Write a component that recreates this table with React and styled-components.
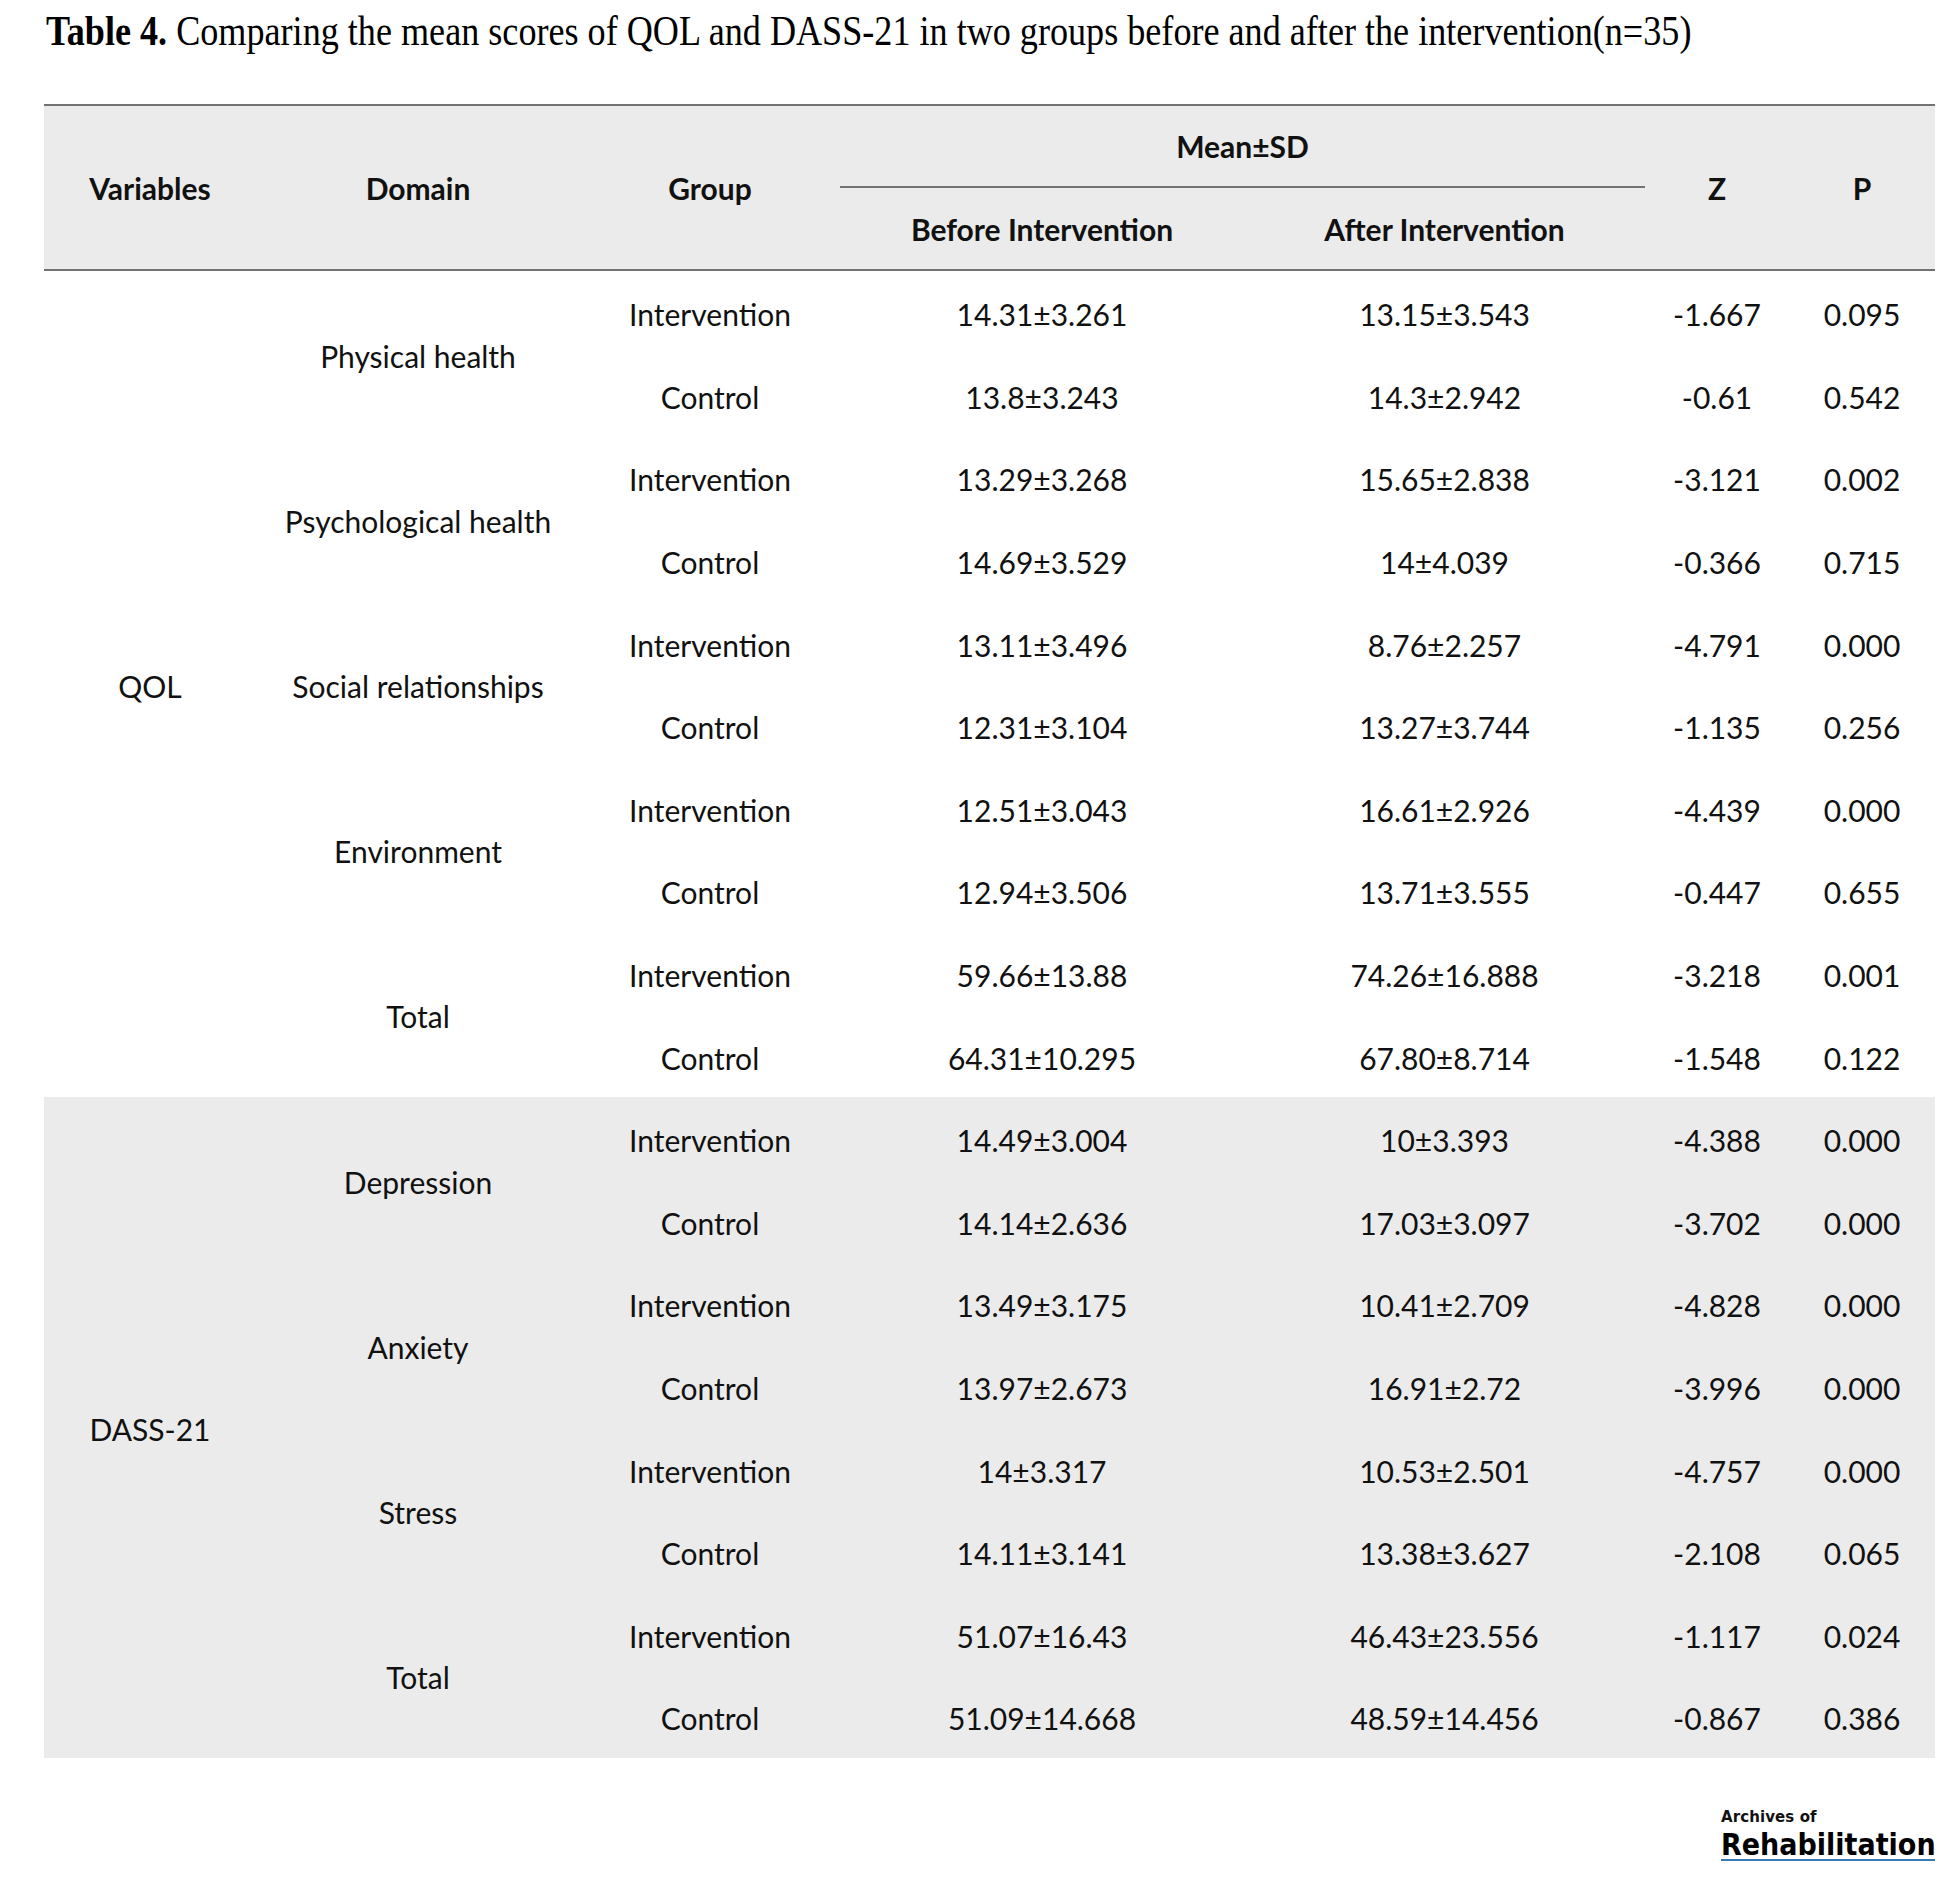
import React from "react";
import styled, { createGlobalStyle } from "styled-components";

const GlobalStyle = createGlobalStyle`
  html, body { margin: 0; padding: 0; background: #ffffff; }
  body { font-family: Lato, "Open Sans", Arial, sans-serif; color: #111; }
`;

const Page = styled.div`
  width: 1954px;
  min-height: 1898px;
  display: flex;
  flex-direction: column;
  background: #fff;
`;

const Caption = styled.div`
  margin: 7px 0 0 46px;
  height: 48px;
  line-height: 48px;
  font-family: "Liberation Serif", "Times New Roman", serif;
  font-size: 41.4px;
  color: #000;
  white-space: nowrap;
  transform: scaleX(0.873);
  transform-origin: left center;
`;

const CaptionLabel = styled.b`
  font-weight: 700;
`;

const Table = styled.table`
  margin: 49px 0 0 44px;
  width: 1891px;
  table-layout: fixed;
  border-collapse: separate;
  border-spacing: 0;
  font-family: Lato, "Open Sans", sans-serif;
  font-size: 30px;
  color: #111;
`;

const HeadRow = styled.tr`
  height: ${(p) => p.$h}px;
`;

const Th = styled.th`
  background: #ebebeb;
  font-weight: 700;
  text-align: center;
  vertical-align: middle;
  padding: 0;
  border-top: ${(p) => (p.$top ? "2px solid #727272" : "none")};
  border-bottom: ${(p) => (p.$bottom ? "2px solid #727272" : "none")};
`;

const BodyRow = styled.tr`
  height: 82.6px;
  background: ${(p) => (p.$shaded ? "#ebebeb" : "#ffffff")};
`;

const Td = styled.td`
  text-align: center;
  vertical-align: middle;
  padding: 4px 0 0;
  white-space: nowrap;
`;

const Footer = styled.div`
  margin-top: 51px;
  display: flex;
  justify-content: flex-end;
  padding-right: 19px;
`;

const Logo = styled.div`
  display: flex;
  flex-direction: column;
  align-items: flex-start;
  width: 214px;
`;

const LogoTop = styled.div`
  font-family: "DejaVu Sans", Lato, sans-serif;
  font-weight: 700;
  font-size: 15px;
  line-height: 16px;
  color: #111;
  letter-spacing: 0.1px;
`;

const LogoMain = styled.div`
  margin-top: 5px;
  font-family: "DejaVu Sans Condensed", "DejaVu Sans", Lato, sans-serif;
  font-stretch: condensed;
  font-weight: 700;
  font-size: 30px;
  line-height: 29px;
  color: #000;
  width: 100%;
  border-bottom: 2px solid #3b7db3;
  white-space: nowrap;
`;

const cols = [212, 324, 260, 404, 401, 144, 146];

const sections = [
  {
    variable: "QOL",
    shaded: false,
    domains: [
      { name: "Physical health", rows: [
        ["Intervention", "14.31±3.261", "13.15±3.543", "-1.667", "0.095"],
        ["Control", "13.8±3.243", "14.3±2.942", "-0.61", "0.542"],
      ] },
      { name: "Psychological health", rows: [
        ["Intervention", "13.29±3.268", "15.65±2.838", "-3.121", "0.002"],
        ["Control", "14.69±3.529", "14±4.039", "-0.366", "0.715"],
      ] },
      { name: "Social relationships", rows: [
        ["Intervention", "13.11±3.496", "8.76±2.257", "-4.791", "0.000"],
        ["Control", "12.31±3.104", "13.27±3.744", "-1.135", "0.256"],
      ] },
      { name: "Environment", rows: [
        ["Intervention", "12.51±3.043", "16.61±2.926", "-4.439", "0.000"],
        ["Control", "12.94±3.506", "13.71±3.555", "-0.447", "0.655"],
      ] },
      { name: "Total", rows: [
        ["Intervention", "59.66±13.88", "74.26±16.888", "-3.218", "0.001"],
        ["Control", "64.31±10.295", "67.80±8.714", "-1.548", "0.122"],
      ] },
    ],
  },
  {
    variable: "DASS-21",
    shaded: true,
    domains: [
      { name: "Depression", rows: [
        ["Intervention", "14.49±3.004", "10±3.393", "-4.388", "0.000"],
        ["Control", "14.14±2.636", "17.03±3.097", "-3.702", "0.000"],
      ] },
      { name: "Anxiety", rows: [
        ["Intervention", "13.49±3.175", "10.41±2.709", "-4.828", "0.000"],
        ["Control", "13.97±2.673", "16.91±2.72", "-3.996", "0.000"],
      ] },
      { name: "Stress", rows: [
        ["Intervention", "14±3.317", "10.53±2.501", "-4.757", "0.000"],
        ["Control", "14.11±3.141", "13.38±3.627", "-2.108", "0.065"],
      ] },
      { name: "Total", rows: [
        ["Intervention", "51.07±16.43", "46.43±23.556", "-1.117", "0.024"],
        ["Control", "51.09±14.668", "48.59±14.456", "-0.867", "0.386"],
      ] },
    ],
  },
];

export default function App() {
  return (
    <Page>
      <GlobalStyle />
      <Caption>
        <CaptionLabel>Table 4.</CaptionLabel> Comparing the mean scores of QOL and DASS-21 in two groups before and after the intervention(n=35)
      </Caption>
      <Table>
        <colgroup>
          {cols.map((w, i) => (
            <col key={i} style={{ width: w }} />
          ))}
        </colgroup>
        <thead>
          <HeadRow $h={84}>
            <Th rowSpan={2} $top $bottom>Variables</Th>
            <Th rowSpan={2} $top $bottom>Domain</Th>
            <Th rowSpan={2} $top $bottom>Group</Th>
            <Th colSpan={2} $top $bottom>Mean±SD</Th>
            <Th rowSpan={2} $top $bottom>Z</Th>
            <Th rowSpan={2} $top $bottom>P</Th>
          </HeadRow>
          <HeadRow $h={83}>
            <Th $bottom>Before Intervention</Th>
            <Th $bottom>After Intervention</Th>
          </HeadRow>
        </thead>
        <tbody>
          {sections.map((sec) =>
            sec.domains.map((dom, di) =>
              dom.rows.map((row, ri) => (
                <BodyRow key={`${sec.variable}-${di}-${ri}`} $shaded={sec.shaded}>
                  {di === 0 && ri === 0 && (
                    <Td rowSpan={sec.domains.length * 2}>{sec.variable}</Td>
                  )}
                  {ri === 0 && <Td rowSpan={2}>{dom.name}</Td>}
                  {row.map((cell, ci) => (
                    <Td key={ci}>{cell}</Td>
                  ))}
                </BodyRow>
              ))
            )
          )}
        </tbody>
      </Table>
      <Footer>
        <Logo>
          <LogoTop>Archives of</LogoTop>
          <LogoMain>Rehabilitation</LogoMain>
        </Logo>
      </Footer>
    </Page>
  );
}
